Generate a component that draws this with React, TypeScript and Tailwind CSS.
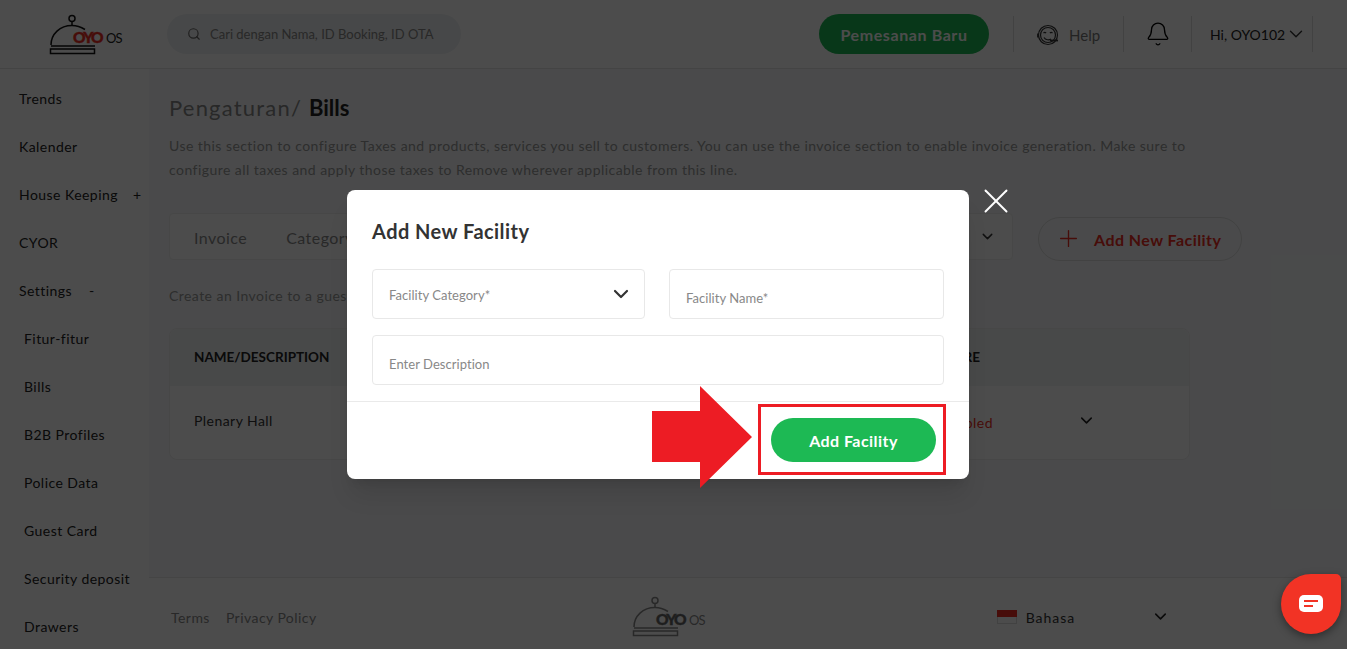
import { Bell, ChevronDown, Plus, Search, X } from "lucide-react";

const NAV = [
  { label: "Trends" },
  { label: "Kalender" },
  { label: "House Keeping", mark: "+" },
  { label: "CYOR" },
  { label: "Settings", mark: "-" },
  { label: "Fitur-fitur", sub: true },
  { label: "Bills", sub: true },
  { label: "B2B Profiles", sub: true },
  { label: "Police Data", sub: true },
  { label: "Guest Card", sub: true },
  { label: "Security deposit", sub: true },
  { label: "Drawers", sub: true },
];

function Logo({ color, red, muted }: { color: string; red: string; muted: string }) {
  return (
    <svg width="76" height="42" viewBox="0 0 76 42" fill="none">
      <circle cx="23" cy="4.5" r="3" stroke={color} strokeWidth="1.5" />
      <path d="M23 8v3" stroke={color} strokeWidth="1.5" />
      <path d="M2 31c0-11 9-19.500 21-19.500 5 0 9 1.500 13 4" stroke={color} strokeWidth="1.5" />
      <path d="M2 32h44" stroke={color} strokeWidth="1.5" />
      <rect x="1.500" y="35" width="44" height="4.500" stroke={color} strokeWidth="1.500" />
      <rect x="22" y="17" width="34" height="14" fill="#fff" />
      <text x="24" y="29" fontFamily="Lato, sans-serif" fontWeight="900" fontSize="15.500" fill={red} stroke={red} strokeWidth="0.4" textLength="31">
        OYO
      </text>
      <text x="57" y="29" fontFamily="Lato, sans-serif" fontSize="13" fill={muted} textLength="17">
        OS
      </text>
    </svg>
  );
}

function HelpIcon() {
  return (
    <svg width="24" height="24" viewBox="0 0 24 24" fill="none" stroke="#333" strokeWidth="1.200">
      <circle cx="12" cy="12" r="9.500" />
      <circle cx="12" cy="12" r="7.500" />
      <path d="M7.500 10c.8-.8 1.800-.8 2.600 0M13.900 10c.8-.8 1.800-.8 2.600 0" />
      <path d="M8 14.500c1.500 2.500 5 3 7 1.500" />
      <path d="M14 17.500h8" strokeWidth="1.800" />
      <path d="M2 10.500v4" strokeWidth="1.800" />
    </svg>
  );
}

export default function App() {
  return (
    <div className="relative h-[649px] w-full overflow-hidden bg-white font-['Lato',sans-serif] text-[14px] tracking-[0.45px] text-[#333]">
      {/* Header */}
      <header className="flex h-[69px] items-center border-b border-[#e4e4e4] bg-white">
        <div className="ml-[49px] mt-[1px] w-[118px]">
          <Logo color="#111" red="#ee2e24" muted="#222" />
        </div>
        <div className="flex h-[40px] w-[294px] items-center gap-[9px] rounded-full bg-[#eff1f3] pl-[20px] text-[13px] tracking-normal text-[#888]">
          <Search size={14} className="text-[#666]" />
          <span className="mt-[2px]">Cari dengan Nama, ID Booking, ID OTA</span>
        </div>
        <button className="ml-[358px] h-[40px] w-[170px] rounded-full bg-[#1db954] pt-[1px] text-[16px] font-bold tracking-[0.6px] text-white">
          Pemesanan Baru
        </button>
        <div className="ml-[24px] flex h-[36px] w-[111px] items-center gap-[9px] border-x border-[#ddd] pl-[22px]">
          <span className="mt-[1px]">
            <HelpIcon />
          </span>
          <span className="mt-[3px] text-[15px] tracking-normal text-[#777]">Help</span>
        </div>
        <div className="flex h-[36px] w-[67px] items-center justify-center">
          <Bell size={26} strokeWidth={1.2} className="text-black" />
        </div>
        <div className="flex h-[36px] w-[122px] items-center gap-[2px] border-x border-[#ddd] pl-[18px] text-[14px] tracking-normal text-[#222]">
          <span className="mt-[1px] w-[73px] whitespace-nowrap">Hi, OYO102</span>
          <ChevronDown size={22} strokeWidth={1.5} className="-mt-[1px] shrink-0 text-[#333]" />
        </div>
      </header>

      <div className="flex h-[580px]">
        {/* Sidebar */}
        <nav className="w-[149px] shrink-0 bg-white pt-[5px]">
          {NAV.map((item) => (
            <div
              key={item.label}
              className={`flex h-[48px] items-center text-[14px] text-[#222] ${item.sub ? "pl-[24px]" : "pl-[19px]"}`}
            >
              <span className="whitespace-nowrap">{item.label}</span>
              {item.mark && <span className={item.mark === "+" ? "ml-[15px]" : "ml-[17px]"}>{item.mark}</span>}
            </div>
          ))}
        </nav>

        <div className="flex min-w-0 flex-1 flex-col">
          {/* Main */}
          <main className="h-[508px] bg-[#f7f9fb] pl-[20px] pt-[25px]">
            <h1 className="text-[22px] leading-[28px] tracking-[1.2px] text-[#888]">
              Pengaturan/ <span className="font-bold tracking-normal text-[#222]">Bills</span>
            </h1>
            <p className="mt-[12px] w-[1040px] text-[14px] leading-[24px] text-[#999]">
              Use this section to configure Taxes and products, services you sell to customers. You can use the invoice
              section to enable invoice generation. Make sure to configure all taxes and apply those taxes to Remove
              wherever applicable from this line.
            </p>
            <div className="mt-[31px] flex items-start gap-[25px]">
              <div className="flex h-[47px] w-[844px] items-center rounded border border-[#eee] bg-white pl-[24px] pr-[16px] text-[16px] text-[#888]">
                <span className="mt-[2px]">Invoice</span>
                <span className="ml-[39px] mt-[2px]">Category</span>
                <ChevronDown size={17} className="ml-auto text-[#333]" />
              </div>
              <button className="mt-[4px] flex h-[44px] w-[204px] items-center gap-[12px] rounded-full border border-[#ddd] pl-[16px] text-[16px] font-bold text-[#ee2e24]">
                <Plus size={27} strokeWidth={1.2} className="-mt-[2px] shrink-0" />
                <span className="mt-[2px] whitespace-nowrap">Add New Facility</span>
              </button>
            </div>
            <p className="mt-[24px] text-[14px] text-[#999]">Create an Invoice to a guest</p>
            <div className="mt-[22px] w-[1021px] overflow-hidden rounded-lg border border-[#eee] bg-white">
              <div className="flex h-[57px] items-center justify-between bg-[#f2f4f6] pl-[24px] pr-[209px] text-[13.5px] font-bold tracking-normal text-[#222]">
                <span>NAME/DESCRIPTION</span>
                <span>FEATURE</span>
              </div>
              <div className="flex h-[73px] items-center pl-[24px] pr-[93px] text-[14px] text-[#333]">
                <span className="-mt-[4px]">Plenary Hall</span>
                <span className="ml-auto text-[#ee2e24]">Disabled</span>
                <ChevronDown size={19} className="-mt-[5px] ml-[84px] text-[#222]" />
              </div>
            </div>
          </main>

          {/* Footer */}
          <footer className="flex h-[72px] items-center border-t border-[#e6e6e6] bg-white pl-[22px] pt-[7px] text-[14px] text-[#888]">
            <span>Terms</span>
            <span className="ml-[16px]">Privacy Policy</span>
            <div className="ml-[315px] -mt-[1px]">
              <Logo color="#888" red="#666" muted="#888" />
            </div>
            <div className="ml-[289px] flex flex-col">
              <span className="h-[7px] w-[20px] bg-[#ee2e24]" />
              <span className="h-[7px] w-[20px] border border-t-0 border-[#ddd] bg-white" />
            </div>
            <span className="ml-[9px] tracking-[1px] text-[#333]">Bahasa</span>
            <ChevronDown size={19} className="ml-[76px] -mt-[2px] text-[#222]" />
          </footer>
        </div>
      </div>

      {/* Dimmed backdrop */}
      <div className="absolute inset-0 bg-black/70" />

      {/* Modal */}
      <div className="absolute left-[347px] top-[190px] h-[289px] w-[622px] rounded-lg bg-white shadow-xl">
        <h2 className="pl-[25px] pt-[27px] text-[20px] font-bold leading-[28px] text-[#333]">Add New Facility</h2>
        <div className="mt-[24px] grid grid-cols-[273px_275px] gap-x-[24px] gap-y-[16px] px-[25px] text-[13px] tracking-[0.05px] text-[#888]">
          <div className="flex h-[50px] items-center justify-between rounded border border-[#e8e8e8] pl-[16px] pr-[11px]">
            <span className="mt-[4px]">Facility Category*</span>
            <ChevronDown size={24} strokeWidth={2.2} className="text-[#333]" />
          </div>
          <div className="flex h-[50px] items-center rounded border border-[#e8e8e8] pl-[16px]">
            <span className="mt-[9px]">Facility Name*</span>
          </div>
          <div className="col-span-2 flex h-[50px] items-center rounded border border-[#e8e8e8] pl-[16px]">
            <span className="mt-[9px]">Enter Description</span>
          </div>
        </div>
        <div className="mt-[16px] flex h-[78px] justify-end border-t border-[#eaeaea] pr-[23px] pt-[2px]">
          <div className="flex h-[71px] w-[188px] items-center border-[3px] border-[#ed1c24] pl-[10px]">
            <button className="h-[44px] w-[165px] rounded-full bg-[#1db954] pt-[2px] text-[16px] font-bold text-white">
              Add Facility
            </button>
          </div>
        </div>
      </div>

      {/* Close */}
      <X size={42} strokeWidth={1.1} className="absolute left-[975px] top-[180px] text-white" />

      {/* Callout arrow */}
      <svg className="absolute left-[652px] top-[386px]" width="100" height="102" viewBox="0 0 100 102">
        <path d="M0 25h48V0l52 51-52 51V76H0z" fill="#ed1c24" />
      </svg>

      {/* Chat bubble */}
      <div className="absolute left-[1281px] top-[574px] flex h-[60px] w-[60px] items-center justify-center rounded-[30px] rounded-tr-[5px] bg-[#f23325] shadow-[0_3px_8px_rgba(0,0,0,0.4)]">
        <svg width="24" height="18" viewBox="0 0 24 18">
          <rect width="24" height="17" rx="5" fill="#fff" />
          <rect x="5" y="5" width="14" height="2" fill="#f23325" />
          <rect x="5" y="10" width="9" height="2" fill="#f23325" />
        </svg>
      </div>
    </div>
  );
}
